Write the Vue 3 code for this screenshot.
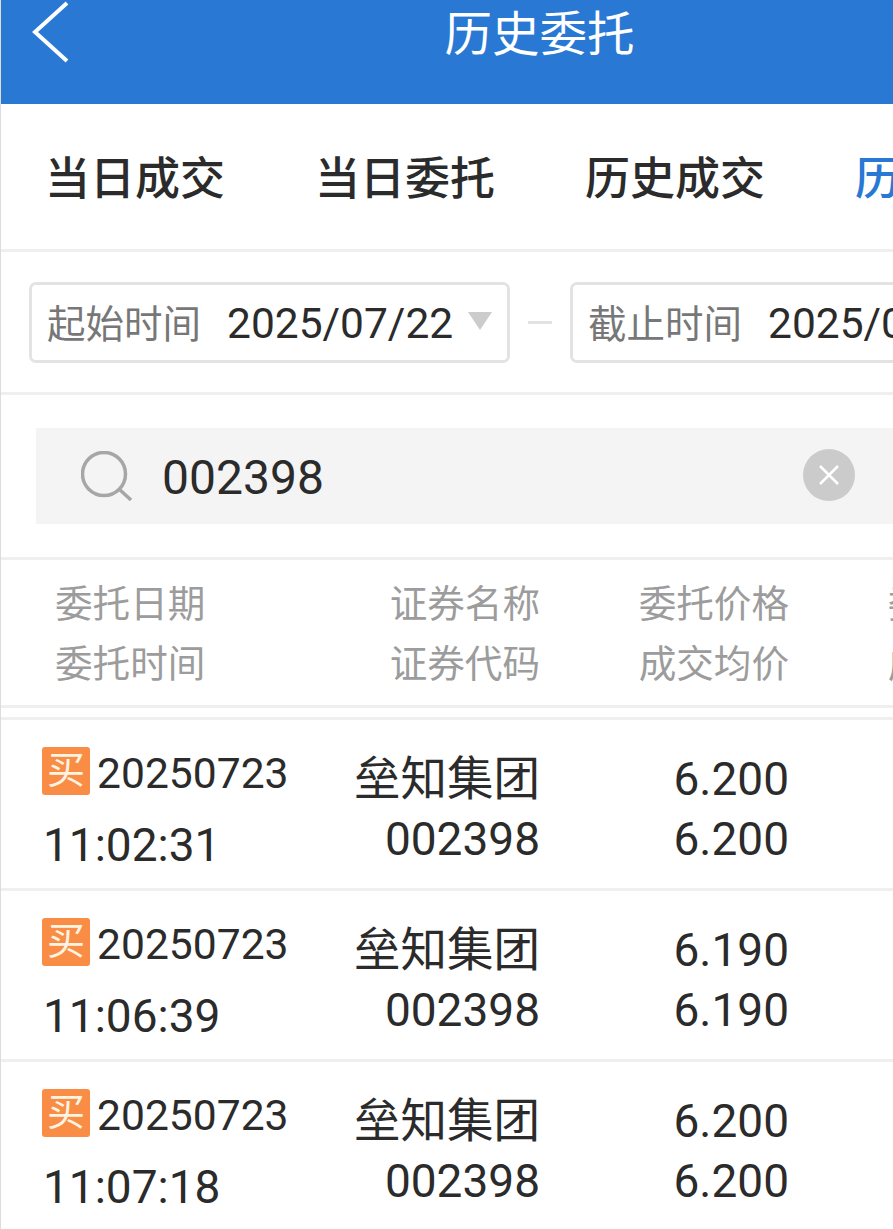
<script setup>
const tabs = [
  { label: '当日成交' },
  { label: '当日委托' },
  { label: '历史成交' },
  { label: '历史委托', active: true }
]
const rows = [
  { time: '11:02:31', price: '6.200' },
  { time: '11:06:39', price: '6.190' },
  { time: '11:07:18', price: '6.200' }
]
</script>

<template>
  <div class="page">
    <header class="topbar">
      <svg class="back" width="40" height="64" viewBox="0 0 40 64" fill="none">
        <path d="M37 3 L5 32 L37 61" stroke="#fff" stroke-width="4" stroke-linejoin="miter" />
      </svg>
      <h1 class="title">历史委托</h1>
    </header>

    <nav class="tabs">
      <span v-for="t in tabs" :key="t.label" class="tab" :class="{ active: t.active }">{{ t.label }}</span>
    </nav>

    <section class="dates">
      <div class="datebox">
        <span class="dlabel">起始时间</span>
        <span class="dvalue">2025/07/22</span>
        <span class="tri"></span>
      </div>
      <span class="dash"></span>
      <div class="datebox">
        <span class="dlabel">截止时间</span>
        <span class="dvalue">2025/07/23</span>
        <span class="tri"></span>
      </div>
    </section>

    <section class="searchwrap">
      <div class="search">
        <svg class="sicon" width="52" height="50" viewBox="0 0 52 50" fill="none">
          <circle cx="23" cy="23" r="21.5" stroke="#a6a6a6" stroke-width="3.5" />
          <path d="M38 38 L50 49" stroke="#a6a6a6" stroke-width="3.5" />
        </svg>
        <span class="stext">002398</span>
        <svg class="clear" width="52" height="52" viewBox="0 0 52 52">
          <circle cx="26" cy="26" r="26" fill="#cbcbcb" />
          <path d="M17 17 L35 35 M35 17 L17 35" stroke="#fff" stroke-width="2.5" />
        </svg>
      </div>
    </section>

    <section class="thead">
      <div class="c1"><div>委托日期</div><div>委托时间</div></div>
      <div class="c2"><div>证券名称</div><div>证券代码</div></div>
      <div class="c3"><div>委托价格</div><div>成交均价</div></div>
      <div class="c4"><div>委托数量</div><div>成交数量</div></div>
    </section>

    <div class="gap"></div>

    <section v-for="(r, i) in rows" :key="i" class="row">
      <div class="c1 rc1">
        <div class="dateline"><span class="badge">买</span><span class="rdate">20250723</span></div>
        <div class="rtime">{{ r.time }}</div>
      </div>
      <div class="c2 rc"><div class="name">垒知集团</div><div>002398</div></div>
      <div class="c3 rc"><div>{{ r.price }}</div><div>{{ r.price }}</div></div>
    </section>
  </div>
</template>

<style>
html, body { margin: 0; padding: 0; background: #fff; }
</style>

<style scoped>
.page {
  width: 893px;
  height: 1229px;
  overflow: hidden;
  background: #fff;
  box-sizing: border-box;
  border-left: 1px solid #ddd;
  font-family: Roboto, "Noto Sans CJK SC", sans-serif;
  color: #2b2b2b;
}
.topbar {
  margin-left: -1px;
  height: 104px;
  background: #2878d4;
  display: flex;
  position: relative;
  justify-content: center;
}
.back { position: absolute; left: 30px; top: 0; }
.title {
  margin: 10px 0 0 186px;
  font-size: 47.5px;
  line-height: 50px;
  font-weight: 400;
  color: #fff;
}
.tabs {
  height: 145px;
  display: flex;
  align-items: center;
  padding-left: 44px;
  gap: 90px;
  border-bottom: 3px solid #efefef;
  white-space: nowrap;
}
.tab { font-size: 45px; font-weight: 500; flex: none; color: #2b2b2b; margin-top: -2px; }
.tab.active { color: #2878d4; }
.dates {
  height: 143px;
  box-sizing: border-box;
  padding-left: 28px;
  display: flex;
  align-items: center;
  border-bottom: 3px solid #efefef;
  white-space: nowrap;
}
.datebox {
  flex: none;
  width: 481px;
  height: 81px;
  box-sizing: border-box;
  border: 3px solid #e3e3e3;
  border-radius: 7px;
  padding-left: 15px;
  display: flex;
  align-items: center;
  position: relative;
}
.dlabel { font-size: 38.5px; color: #777; margin: -3px 26px 0 0; }
.dvalue { font-size: 42.5px; color: #2b2b2b; margin-top: 2px; }
.tri {
  margin-left: 15px;
  margin-top: -2px;
  border-left: 12px solid transparent;
  border-right: 12px solid transparent;
  border-top: 18px solid #cccccc;
}
.dash {
  flex: none;
  width: 24px;
  height: 3px;
  background: #e2e2e2;
  margin: 0 18px;
}
.searchwrap {
  height: 162px;
  box-sizing: border-box;
  padding: 33px 0 0 35px;
}
.search {
  width: 900px;
  height: 96px;
  background: #f4f4f4;
  display: flex;
  align-items: center;
  position: relative;
}
.sicon { margin-left: 45px; flex: none; }
.stext { margin: 3px 0 0 29px; font-size: 48px; color: #2b2b2b; }
.clear { position: absolute; left: 767px; top: 21px; }
.thead {
  height: 151px;
  box-sizing: border-box;
  border-top: 3px solid #efefef;
  border-bottom: 3px solid #efefef;
  display: grid;
  grid-template-columns: 540px 248px 249px;
  align-items: center;
  padding-top: 2px;
  font-size: 37.6px;
  line-height: 60px;
  color: #9c9c9c;
  white-space: nowrap;
}
.thead .c1 { padding-left: 54px; }
.c1 { grid-column: 1; grid-row: 1; }
.c2 { grid-column: 1; grid-row: 1; text-align: right; padding-right: 1px; }
.c3 { grid-column: 2; grid-row: 1; text-align: right; }
.c4 { grid-column: 3; grid-row: 1; text-align: right; }
.gap { height: 9px; border-bottom: 3px solid #efefef; }
.row {
  height: 171px;
  box-sizing: border-box;
  border-bottom: 3px solid #efefef;
  display: grid;
  grid-template-columns: 540px 248px;
  font-size: 46px;
  line-height: 60px;
  color: #2b2b2b;
}
.rc1 { padding-left: 41px; }
.dateline { display: flex; align-items: center; margin-top: 27px; height: 48px; }
.badge {
  width: 48px;
  height: 48px;
  flex: none;
  border-radius: 3px;
  background: #f98d45;
  color: #fff3e2;
  font-size: 38px;
  line-height: 46px;
  text-align: center;
}
.rdate { margin: 3px 0 0 7px; font-size: 42.6px; }
.rtime { margin-top: 20px; padding-left: 1px; }
.rc { padding-top: 29px; }
.name { font-size: 46.5px; }
</style>
